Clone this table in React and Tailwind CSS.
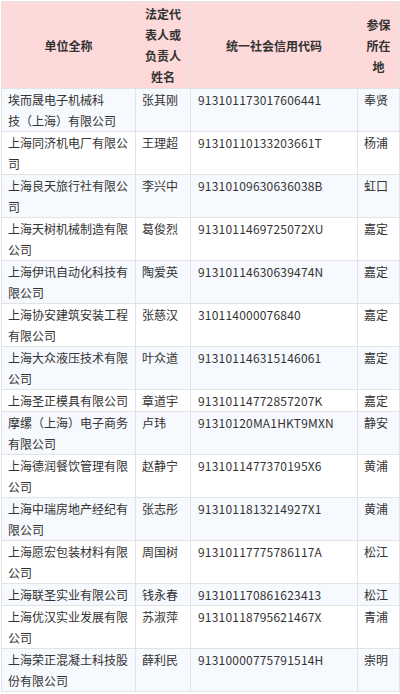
import React from "react";

const rows = [
  [["埃而晟电子机械科", "技（上海）有限公司"], "张其刚", "913101173017606441", "奉贤"],
  [["上海同济机电厂有限公", "司"], "王理超", "91310110133203661T", "杨浦"],
  [["上海良天旅行社有限公", "司"], "李兴中", "91310109630636038B", "虹口"],
  [["上海天树机械制造有限", "公司"], "葛俊烈", "9131011469725072XU", "嘉定"],
  [["上海伊讯自动化科技有", "限公司"], "陶爱英", "91310114630639474N", "嘉定"],
  [["上海协安建筑安装工程", "有限公司"], "张慈汉", "310114000076840", "嘉定"],
  [["上海大众液压技术有限", "公司"], "叶众道", "913101146315146061", "嘉定"],
  [["上海圣正模具有限公司"], "章道宇", "91310114772857207K", "嘉定"],
  [["摩缧（上海）电子商务", "有限公司"], "卢玮", "91310120MA1HKT9MXN", "静安"],
  [["上海德润餐饮管理有限", "公司"], "赵静宁", "9131011477370195X6", "黄浦"],
  [["上海中瑞房地产经纪有", "限公司"], "张志彤", "9131011813214927X1", "黄浦"],
  [["上海愿宏包装材料有限", "公司"], "周国树", "91310117775786117A", "松江"],
  [["上海联圣实业有限公司"], "钱永春", "913101170861623413", "松江"],
  [["上海优汉实业发展有限", "公司"], "苏淑萍", "91310118795621467X", "青浦"],
  [["上海荣正混凝土科技股", "份有限公司"], "薛利民", "91310000775791514H", "崇明"],
];

export default function App() {
  return (
    <div
      className="bg-white w-[400px] min-h-[694px] pl-[1px] pt-[1px]"
      style={{ fontFamily: '"Noto Sans CJK SC", "Noto Sans", sans-serif' }}
    >
      <table className="w-[398px] table-fixed border-collapse text-[12px] leading-[21px] text-[#333333]">
        <colgroup>
          <col className="w-[134px]" />
          <col className="w-[55px]" />
          <col className="w-[167px]" />
          <col className="w-[42px]" />
        </colgroup>
        <thead>
          <tr className="bg-[#fdd9d9] h-[87px]">
            <th className="border border-[#e3e3e6] px-[6px] py-0 text-center align-middle font-bold">单位全称</th>
            <th className="border border-[#e3e3e6] px-[6px] py-0 text-center align-middle font-bold">法定代表人或负责人姓名</th>
            <th className="border border-[#e3e3e6] px-[6px] py-0 text-center align-middle font-bold">统一社会信用代码</th>
            <th className="border border-[#e3e3e6] px-[6px] py-0 text-center align-middle font-bold">参保所在地</th>
          </tr>
        </thead>
        <tbody>
          {rows.map((r, i) => (
            <tr key={i} className={i % 2 === 0 ? "bg-[#f6f9fd]" : "bg-white"}>
              <td className="border border-[#e3e3e6] px-[6px] py-0 align-top">
                {r[0].map((l, j) => (
                  <div key={j} className="whitespace-nowrap">{l}</div>
                ))}
              </td>
              <td className="border border-[#e3e3e6] px-[6px] py-0 align-top whitespace-nowrap">{r[1]}</td>
              <td className="border border-[#e3e3e6] px-[7px] py-0 align-top whitespace-nowrap tracking-[0.2px]">{r[2]}</td>
              <td className="border border-[#e3e3e6] px-[6px] py-0 align-top whitespace-nowrap">{r[3]}</td>
            </tr>
          ))}
        </tbody>
      </table>
    </div>
  );
}
